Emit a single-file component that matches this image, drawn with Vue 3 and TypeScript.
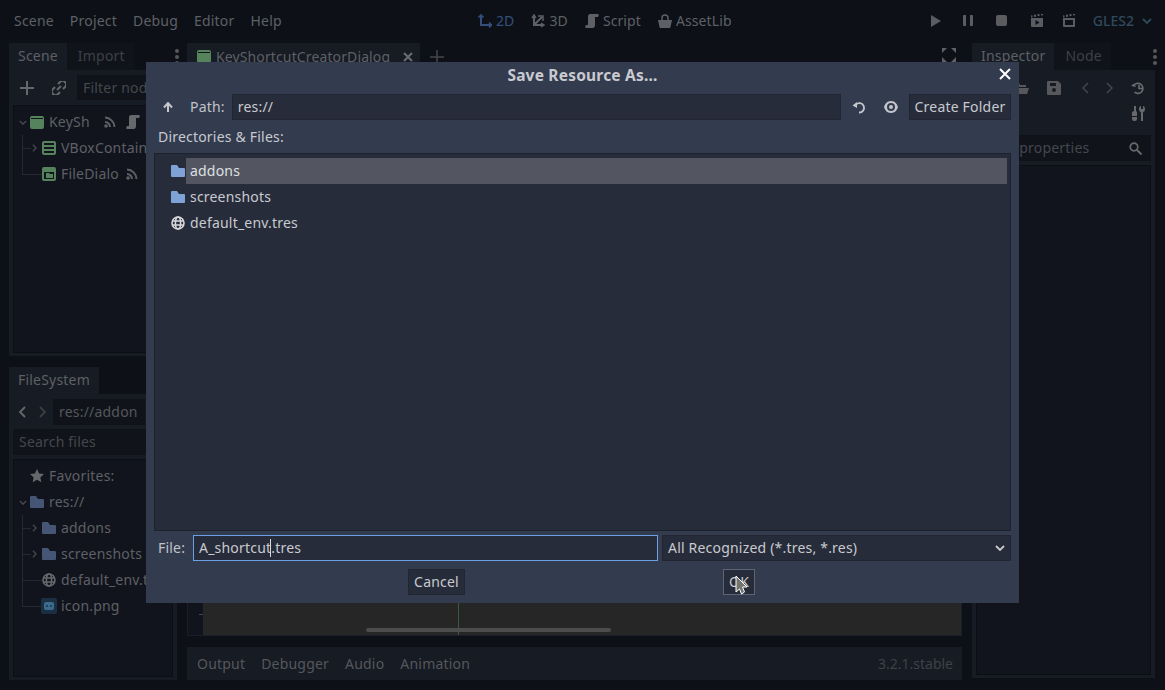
<script setup lang="ts">
const menus: string[] = ['Scene', 'Project', 'Debug', 'Editor', 'Help']
const bottomTabs: string[] = ['Output', 'Debugger', 'Audio', 'Animation']
</script>

<template>
  <div class="app">
    <svg class="defs" width="0" height="0">
      <symbol id="folder" viewBox="0 0 14 12"><path d="M0 1a1 1 0 0 1 1-1h5l2 3h5a1 1 0 0 1 1 1v7a1 1 0 0 1-1 1H1a1 1 0 0 1-1-1z" fill="currentColor" /></symbol>
      <symbol id="globe" viewBox="0 0 14 14"><g fill="none" stroke="currentColor" stroke-width="1.600"><circle cx="7" cy="7" r="6" /><ellipse cx="7" cy="7" rx="2.600" ry="6" /><path d="M1 5h12M1 9h12" /></g></symbol>
      <symbol id="rss" viewBox="0 0 12 12"><g fill="none" stroke="currentColor" stroke-width="2"><path d="M1 1.500c5 0 9.500 4.500 9.500 9.500" /><path d="M1 6c2.800 0 5 2.200 5 5" /></g><circle cx="2" cy="10" r="1.800" fill="currentColor" /></symbol>
      <symbol id="scroll" viewBox="0 0 14 14"><path d="M5 0h8c1 0 1 2 0 3h-3v8c0 2-1 3-2 3H1c-1 0-1-2 0-3h2V2c0-1 1-2 2-2z" fill="currentColor" /></symbol>
      <symbol id="chevdown" viewBox="0 0 10 6"><path d="M1 1l4 4 4-4" fill="none" stroke="currentColor" stroke-width="1.800" /></symbol>
      <symbol id="chevright" viewBox="0 0 6 10"><path d="M1 1l4 4-4 4" fill="none" stroke="currentColor" stroke-width="1.800" /></symbol>
      <symbol id="clap" viewBox="0 0 14 13"><path d="M1 4h12v8a1 1 0 0 1-1 1H2a1 1 0 0 1-1-1z" fill="currentColor" /><path d="M1 2.500l1.500-.3M4 1.900l2-.4M7.500 1.200l2-.4M11 .6l2-.4" stroke="currentColor" stroke-width="2" /><path d="M5.500 6v5l4-2.500z" fill="#0e1118" /></symbol>
      <symbol id="clap2" viewBox="0 0 14 13"><path d="M1 4h12v8a1 1 0 0 1-1 1H2a1 1 0 0 1-1-1z" fill="currentColor" /><path d="M1 2.500l1.500-.3M4 1.900l2-.4M7.500 1.200l2-.4M11 .6l2-.4" stroke="currentColor" stroke-width="2" /><rect x="3" y="6" width="8" height="5" fill="#0e1118" /></symbol>
    </svg>

    <header class="topbar">
      <nav class="menus">
        <span v-for="m in menus" :key="m">{{ m }}</span>
      </nav>
      <div class="modes">
        <span class="mode active">
          <svg width="14" height="14" viewBox="0 0 14 14"><path d="M3 1v10h11" fill="none" stroke="currentColor" stroke-width="2" /><path d="M0.500 3.500L3 1l2.500 2.500M11 8.500l2.500 2.500-2.500 2.500" fill="none" stroke="currentColor" stroke-width="1.600" /></svg>2D
        </span>
        <span class="mode">
          <svg width="14" height="14" viewBox="0 0 14 14"><path d="M3 2v9h9M3 11l8-8" fill="none" stroke="currentColor" stroke-width="2" /><path d="M1 4l2-3 2 3M10 9l3 2-3 2M7 2h5v5" fill="none" stroke="currentColor" stroke-width="1.500" /></svg>3D
        </span>
        <span class="mode">
          <svg width="14" height="14"><use href="#scroll" /></svg>Script
        </span>
        <span class="mode">
          <svg width="14" height="14" viewBox="0 0 14 14"><path d="M0 6h14l-1.500 7a1 1 0 0 1-1 1h-9a1 1 0 0 1-1-1z" fill="currentColor" /><path d="M4 6V4a3 3 0 0 1 6 0v2" fill="none" stroke="currentColor" stroke-width="1.500" /></svg>AssetLib
        </span>
      </div>
      <div class="runbar">
        <svg class="r-play" width="10" height="12" viewBox="0 0 10 12"><path d="M0 0l10 6-10 6z" fill="currentColor" /></svg>
        <svg class="r-pause" width="10" height="11" viewBox="0 0 10 11"><path d="M0 1a1 1 0 0 1 1-1h2v11H1a1 1 0 0 1-1-1zM7 0h2a1 1 0 0 1 1 1v9a1 1 0 0 1-1 1H7z" fill="currentColor" /></svg>
        <svg class="r-stop" width="11" height="11" viewBox="0 0 11 11"><rect width="11" height="11" rx="2" fill="currentColor" /></svg>
        <svg class="r-m1" width="14" height="13"><use href="#clap" /></svg>
        <svg class="r-m2" width="14" height="13"><use href="#clap2" /></svg>
        <span class="gles">GLES2</span>
        <svg class="gles-chev" width="10" height="6"><use href="#chevdown" /></svg>
      </div>
    </header>

    <main class="workspace">
      <aside class="leftcol">
        <section class="dock scene-dock">
          <div class="tabs">
            <span class="tab on">Scene</span>
            <span class="tab">Import</span>
            <span class="dots"><i /><i /><i /></span>
          </div>
          <div class="dockbody">
            <div class="toolrow">
              <svg class="tool-plus" width="14" height="14" viewBox="0 0 14 14"><path d="M7 0v14M0 7h14" stroke="currentColor" stroke-width="2" /></svg>
              <svg class="tool-link" width="14" height="14" viewBox="0 0 14 14"><g fill="none" stroke="currentColor" stroke-width="2"><path d="M6 3l2-2a3 3 0 0 1 5 5l-2 2" /><path d="M8 11l-2 2a3 3 0 0 1-5-5l2-2" /><path d="M5 9l4-4" /></g></svg>
              <span class="field filter">Filter nodes</span>
            </div>
            <div class="treebox scene-tree">
              <div class="row"><svg class="chev" width="8" height="5"><use href="#chevdown" /></svg><span class="node-ic"><b /></span><span>KeySh</span>
                <svg class="rss1" width="12" height="12"><use href="#rss" /></svg>
                <svg class="scr1" width="14" height="14"><use href="#scroll" /></svg>
              </div>
              <div class="row in1 first"><svg class="chevr" width="5" height="8"><use href="#chevright" /></svg>
                <svg class="green" width="14" height="14" viewBox="0 0 14 14"><path fill-rule="evenodd" d="M2 0h10a2 2 0 0 1 2 2v10a2 2 0 0 1-2 2H2a2 2 0 0 1-2-2V2a2 2 0 0 1 2-2zm0 2v2h10V2zm0 4v2h10V6zm0 4v2h10v-2z" fill="currentColor" /></svg>
                <span>VBoxContain</span>
              </div>
              <div class="row in1 noarrow last">
                <svg class="green" width="14" height="14" viewBox="0 0 14 14"><path fill-rule="evenodd" d="M2 0h10a2 2 0 0 1 2 2v10a2 2 0 0 1-2 2H2a2 2 0 0 1-2-2V2a2 2 0 0 1 2-2zM2 5v7h10V5zm2 1h3l1 1h3v4H4z" fill="currentColor" /></svg>
                <span>FileDialo</span>
                <svg class="rss2" width="12" height="12"><use href="#rss" /></svg>
              </div>
            </div>
          </div>
        </section>

        <section class="dock fs-dock">
          <div class="tabs">
            <span class="tab on">FileSystem</span>
          </div>
          <div class="dockbody">
            <div class="navrow">
              <svg class="nav-l" width="7" height="12" viewBox="0 0 7 12"><path d="M6 1L1 6l5 5" fill="none" stroke="currentColor" stroke-width="1.800" /></svg>
              <svg class="nav-r" width="7" height="12" viewBox="0 0 7 12"><path d="M1 1l5 5-5 5" fill="none" stroke="currentColor" stroke-width="1.800" /></svg>
              <span class="field pathf">res://addon</span>
            </div>
            <div class="field searchf">Search files</div>
            <div class="treebox fs-tree">
              <div class="row fav"><svg class="star" width="14" height="14" viewBox="0 0 14 14"><path d="M7 0l2.100 4.600 4.900.5-3.700 3.300 1.100 4.900L7 10.800l-4.400 2.500 1.100-4.900L0 5.100l4.900-.5z" fill="currentColor" /></svg><span>Favorites:</span></div>
              <div class="row"><svg class="chev" width="8" height="5"><use href="#chevdown" /></svg><svg class="fsfolder" width="14" height="12"><use href="#folder" /></svg><span>res://</span></div>
              <div class="row in1 first"><svg class="chevr" width="5" height="8"><use href="#chevright" /></svg><svg class="fsfolder" width="14" height="12"><use href="#folder" /></svg><span>addons</span></div>
              <div class="row in1"><svg class="chevr" width="5" height="8"><use href="#chevright" /></svg><svg class="fsfolder" width="14" height="12"><use href="#folder" /></svg><span>screenshots</span></div>
              <div class="row in1 noarrow"><svg class="fsglobe" width="14" height="14"><use href="#globe" /></svg><span>default_env.tres</span></div>
              <div class="row in1 noarrow last"><svg class="pngicon" width="16" height="16" viewBox="0 0 16 16"><rect width="16" height="16" rx="2" fill="#1b2f42" /><rect x="3" y="4" width="10" height="8" rx="2" fill="#3c6b8f" /><circle cx="6" cy="8" r="1" fill="#1b2f42" /><circle cx="10" cy="8" r="1" fill="#1b2f42" /></svg><span>icon.png</span></div>
            </div>
          </div>
        </section>
      </aside>

      <section class="center">
        <div class="tabs center-tabs">
          <span class="tab on doc">
            <span class="node-ic small"><b /></span>KeyShortcutCreatorDialog
            <svg class="doc-x" width="10" height="10" viewBox="0 0 10 10"><path d="M1 1l8 8M9 1L1 9" stroke="currentColor" stroke-width="2" /></svg>
          </span>
          <svg class="doc-plus" width="14" height="14" viewBox="0 0 14 14"><path d="M7 0v14M0 7h14" stroke="currentColor" stroke-width="1.500" /></svg>
          <svg class="fullscr" width="14" height="14" viewBox="0 0 14 14"><path d="M0 0h5L0 5zM14 0v5L9 0zM0 14V9l5 5zM14 14H9l5-5z" fill="currentColor" /></svg>
        </div>
        <div class="viewport">
          <div class="ruler"><i /></div>
          <div class="canvas">
            <i class="yaxis" />
            <i class="hscroll" />
          </div>
        </div>
        <div class="bottombar">
          <span v-for="t in bottomTabs" :key="t">{{ t }}</span>
          <span class="version">3.2.1.stable</span>
        </div>
      </section>

      <aside class="rightcol">
        <div class="tabs">
          <span class="tab on">Inspector</span>
          <span class="tab">Node</span>
          <span class="dots"><i /><i /><i /></span>
        </div>
        <div class="dockbody inspector">
          <div class="insp-tools">
            <svg width="15" height="12" viewBox="0 0 15 12"><path d="M1 1h4l1 2h6v2H3L1 11zM3 6h12l-2 6H1z" fill="currentColor" /></svg>
            <svg width="14" height="14" viewBox="0 0 14 14"><path fill-rule="evenodd" d="M1 0h10l3 3v10a1 1 0 0 1-1 1H1a1 1 0 0 1-1-1V1a1 1 0 0 1 1-1zm2 2v3h6V2zm4 5a2 2 0 1 0 0 4 2 2 0 0 0 0-4z" fill="currentColor" /></svg>
            <svg class="in-l" width="7" height="12" viewBox="0 0 7 12"><path d="M6 1L1 6l5 5" fill="none" stroke="currentColor" stroke-width="1.500" /></svg>
            <svg class="in-r" width="7" height="12" viewBox="0 0 7 12"><path d="M1 1l5 5-5 5" fill="none" stroke="currentColor" stroke-width="1.500" /></svg>
            <svg class="in-hist" width="14" height="14" viewBox="0 0 14 14"><g fill="none" stroke="currentColor" stroke-width="1.600"><path d="M2.500 5a5 5 0 1 1 1 6" /><path d="M8 4v3.500h3" /></g><path d="M0 5l3-2.500L5 6z" fill="currentColor" /></svg>
          </div>
          <div class="insp-tool2">
            <svg width="13" height="15" viewBox="0 0 13 15"><path d="M2 0h2v5l1 1v4H0V6l2-1zM0 11h5v2a2 2 0 0 1-2 2H2a2 2 0 0 1-2-2zM9 0v3h2V0c1 0 2 1 2 3s-1 3-2 3v9H9V6C8 6 7 5 7 3s1-3 2-3z" fill="currentColor" /></svg>
          </div>
          <div class="field insp-filter">
            <span>Filter properties</span>
            <svg width="13" height="13" viewBox="0 0 13 13"><circle cx="5" cy="5" r="3.800" fill="none" stroke="currentColor" stroke-width="1.700" /><path d="M8 8l4.500 4.500" stroke="currentColor" stroke-width="2" /></svg>
          </div>
          <div class="treebox insp-box" />
        </div>
      </aside>
    </main>

    <div class="dialog">
      <div class="dlg-title">Save Resource As...
        <svg class="dlg-x" width="12" height="12" viewBox="0 0 12 12"><path d="M1 1l10 10M11 1L1 11" stroke="#ffffff" stroke-width="2" /></svg>
      </div>
      <div class="dlg-path">
        <svg class="up" width="10" height="10" viewBox="0 0 10 10"><path d="M5 10V2M1 5.500L5 1l4 4.500" fill="none" stroke="#c4c6cc" stroke-width="2" /></svg>
        <span class="lbl">Path:</span>
        <span class="input path-in">res://</span>
        <svg class="refresh" width="14" height="14" viewBox="0 0 14 14"><path d="M4 4.500a4.700 4.700 0 1 1 3 8" fill="none" stroke="#c4c6cc" stroke-width="1.800" /><path d="M0.500 5.500L5 2v6z" fill="#c4c6cc" /></svg>
        <svg class="eye" width="14" height="12" viewBox="0 0 14 12"><path fill-rule="evenodd" d="M7 0c4 0 6 3 7 6-1 3-3 6-7 6s-6-3-7-6c1-3 3-6 7-6zm0 2a4 4 0 1 0 0 8 4 4 0 0 0 0-8zm0 2a2 2 0 1 1 0 4 2 2 0 0 1 0-4z" fill="#c4c6cc" /></svg>
        <span class="btn create">Create Folder</span>
      </div>
      <div class="dlg-label">Directories &amp; Files:</div>
      <div class="dlg-list">
        <div class="item">
          <svg class="blue" width="14" height="12"><use href="#folder" /></svg>
          <span class="sel">addons</span>
        </div>
        <div class="item">
          <svg class="blue" width="14" height="12"><use href="#folder" /></svg>
          <span class="nm">screenshots</span>
        </div>
        <div class="item">
          <svg class="white" width="14" height="14"><use href="#globe" /></svg>
          <span class="nm">default_env.tres</span>
        </div>
      </div>
      <div class="dlg-file">
        <span class="lbl">File:</span>
        <span class="input file-in">A_shortcut.tres<i class="caret" /></span>
        <span class="input type-in">All Recognized (*.tres, *.res)
          <svg width="10" height="6"><use href="#chevdown" /></svg>
        </span>
      </div>
      <div class="dlg-btns">
        <span class="btn cancel">Cancel</span>
        <span class="btn ok">OK</span>
      </div>
      <svg class="pointer" width="13" height="22" viewBox="0 0 13 22"><path d="M1 1l11 11H7.500l2 5-3 2-2-5L1 17z" fill="#74746e" stroke="#ffffff" stroke-width="1" /></svg>
    </div>
  </div>
</template>

<style>
html, body { margin: 0; background: #0d1017; }
</style>

<style scoped>
.app {
  position: relative;
  width: 1165px;
  height: 690px;
  overflow: hidden;
  background: #0d1017;
  color: #5e6066;
  font: 14px/20px "Noto Sans", sans-serif;
  letter-spacing: 0.2px;
}
.defs { position: absolute; }
svg { flex: none; display: block; }

.topbar { height: 43px; display: flex; align-items: center; padding: 0 0 2px 14px; box-sizing: border-box; }
.menus { display: flex; gap: 16px; }
.modes { display: flex; gap: 17px; position: absolute; left: 478px; letter-spacing: 0.1px; }
.mode { display: flex; align-items: center; gap: 4px; }
.mode.active { color: #34507a; }
.runbar { display: flex; align-items: center; margin-left: auto; padding-right: 13px; color: #5a5c60; }
.r-pause { margin-left: 22px; }
.r-stop { margin-left: 23px; }
.r-m1 { margin-left: 23px; }
.r-m2 { margin-left: 18px; }
.gles { margin-left: 17px; color: #30495c; font-weight: 500; letter-spacing: 0; }
.gles-chev { margin-left: 8px; color: #30495c; }

.workspace { display: grid; grid-template-columns: 168px 775px 183px; column-gap: 10px; padding-left: 9px; height: 637px; }
.leftcol { display: flex; flex-direction: column; height: 637px; }
.dock { display: flex; flex-direction: column; }
.scene-dock { height: 313px; }
.fs-dock { height: 313px; margin-top: 11px; }
.tabs { display: flex; height: 27px; flex: none; position: relative; }
.tab { padding: 3px 9px 0; box-sizing: border-box; height: 27px; background: #10131a; color: #3e4147; }
.tab.on { background: #171b24; color: #5e6066; }
.tab + .tab { padding-left: 11px; }
.dots { position: absolute; right: -2px; top: 6px; display: flex; flex-direction: column; gap: 2px; }
.dots i { width: 4px; height: 4px; border-radius: 50%; background: #56585c; }
.dockbody { flex: 1; background: #171b24; padding: 5px 4px 3px; display: flex; flex-direction: column; min-height: 0; }
.field { background: #10131a; border: 1px solid #0f1219; box-sizing: border-box; height: 26px; line-height: 24px; padding-left: 5px; color: #45474d; overflow: hidden; white-space: nowrap; }
.treebox { background: #11141c; border: 1px solid #0b0e14; box-sizing: border-box; flex: 1; min-height: 0; color: #5e6066; overflow: hidden; }
.toolrow { display: flex; align-items: center; height: 25px; color: #66686c; }
.tool-plus { margin-left: 7px; }
.tool-link { margin-left: 18px; }
.filter { margin-left: 11px; flex: 1; height: 25px; }
.scene-tree { margin-top: 5px; padding-top: 3px; }
.row { display: flex; align-items: center; height: 26px; padding-left: 3px; white-space: nowrap; position: relative; }
.row > span:last-of-type { margin-left: 5px; }
.chev { color: #44464b; margin-right: 3px; margin-left: 2px; }
.chevr { color: #44464b; margin-right: 5px; margin-left: 15px; }
.in1::after { content: ""; position: absolute; left: 8px; top: 0; bottom: 0; width: 1px; background: #25282f; }
.in1.last::after { bottom: 13px; }
.in1::before { content: ""; position: absolute; left: 8px; top: 13px; width: 9px; height: 1px; background: #25282f; }
.in1.noarrow { padding-left: 28px; }
.in1.noarrow::before { width: 20px; }
.node-ic { width: 14px; height: 13px; background: #55835b; border-radius: 2px; position: relative; display: block; flex: none; }
.node-ic b { position: absolute; left: 1px; right: 1px; top: 2px; height: 1px; background: #11141c; }
.row > .node-ic + span { margin-left: 5px; }
.green { color: #55835b; }
.rss1 { position: absolute; left: 90px; top: 7px; color: #5e6066; }
.scr1 { position: absolute; left: 112px; top: 6px; color: #66686c; }
.rss2 { position: absolute; left: 112px; top: 7px; color: #5e6066; }
.pngicon { margin-left: -1px; margin-right: -1px; }

.navrow { display: flex; align-items: center; height: 26px; color: #66686c; margin-top: 0; }
.nav-l { margin-left: 6px; }
.nav-r { margin-left: 13px; color: #3c3e43; }
.pathf { margin-left: 7px; width: 92px; color: #55575c; }
.searchf { margin-top: 4px; height: 26px; }
.fs-tree { margin-top: 4px; padding-top: 3px; }
.star { margin-left: 13px; color: #66686c; }
.fav > span { margin-left: 5px !important; }
.fsfolder { color: #445575; }
.fsglobe { color: #66686c; }

.center { display: flex; flex-direction: column; }
.center-tabs { align-items: flex-start; margin-left: 0; }
.doc { display: flex; align-items: center; gap: 5px; width: 233px; padding: 0 9px 0 10px; letter-spacing: 0.12px; }
.node-ic.small { background: #55835b; }
.doc-x { margin-left: auto; margin-right: -2px; color: #6a6c70; }
.doc-plus { margin: 7px 0 0 10px; color: #45474b; }
.fullscr { margin: 5px 0 0 auto; margin-right: 6px; color: #5e6066; }
.viewport { height: 566px; display: flex; border: 1px solid #1a1e28; box-sizing: border-box; background: #11141c; }
.ruler { width: 15px; position: relative; }
.ruler i { position: absolute; left: 11px; bottom: 20px; width: 4px; height: 1px; background: #44464b; }
.canvas { flex: 1; background: #262626; position: relative; }
.yaxis { position: absolute; left: 255px; top: 0; bottom: 0; width: 1px; background: #3a5a3f; }
.hscroll { position: absolute; left: 163px; bottom: 3px; width: 245px; height: 4px; border-radius: 2px; background: #4d4d4d; }
.bottombar { margin-top: 11px; height: 33px; background: #171b24; display: flex; align-items: center; gap: 16px; padding: 0 9px 0 10px; color: #55575c; }
.version { margin-left: auto; color: #3e4147; letter-spacing: 0; }

.rightcol { display: flex; flex-direction: column; height: 635px; }
.inspector { padding: 0 4px 3px; }
.insp-tools { height: 36px; display: flex; align-items: center; color: #56585c; padding-left: 38px; flex: none; }
.insp-tools svg:nth-child(2) { margin-left: 18px; }
.in-l { margin-left: 21px; color: #44464b; }
.in-r { margin-left: 17px; color: #44464b; }
.in-hist { margin-left: 18px; color: #6a6c70; }
.insp-tool2 { height: 24px; flex: none; display: flex; justify-content: flex-end; padding-right: 6px; align-items: flex-start; color: #66686c; }
.insp-filter { display: flex; align-items: center; justify-content: space-between; flex: none; padding: 0 8px 0 0; margin-top: 5px; height: 26px; }
.insp-filter svg { color: #66686c; }
.insp-filter span { margin-left: 4px; }
.insp-box { margin-top: 4px; }

.dialog {
  position: absolute; left: 146px; top: 62px; width: 873px; height: 541px;
  background: #333b4f; box-sizing: border-box; padding: 0 8px;
  color: #c8cad0; display: flex; flex-direction: column;
}
.dlg-title { height: 32px; line-height: 26px; text-align: center; font-weight: 700; font-size: 15.500px; color: #c8cad0; position: relative; flex: none; }
.dlg-x { position: absolute; right: 0; top: 6px; }
.dlg-path { height: 26px; display: flex; align-items: center; flex: none; }
.up { margin-left: 9px; }
.lbl { color: #c0c3ca; }
.dlg-path .lbl { margin-left: 17px; }
.input { background: #272c3a; border: 1px solid #222632; box-sizing: border-box; height: 26px; line-height: 24px; padding-left: 5px; display: block; white-space: nowrap; flex: none; }
.path-in { margin-left: 7px; width: 609px; }
.refresh { margin-left: 11px; }
.eye { margin-left: 18px; }
.btn { background: #272c3a; border: 1px solid #222632; box-sizing: border-box; height: 26px; line-height: 24px; text-align: center; flex: none; display: block; }
.create { margin-left: auto; width: 102px; }
.dlg-label { height: 33px; line-height: 33px; padding-left: 4px; flex: none; }
.dlg-list { height: 378px; flex: none; background: #272c3a; border: 1px solid #1e222d; box-sizing: border-box; padding: 4px 3px 0 16px; }
.item { display: flex; align-items: center; height: 26px; }
.blue { color: #7fa3d6; }
.white { color: #d6d8dc; }
.sel { flex: 1; height: 26px; line-height: 26px; margin-left: 1px; padding-left: 4px; background: #535661; color: #dfe0e4; }
.nm { margin-left: 5px; }
.dlg-file { margin-top: 4px; height: 26px; display: flex; align-items: center; flex: none; }
.dlg-file .lbl { margin-left: 4px; width: 27px; }
.file-in { margin-left: 8px; width: 465px; border-color: #6b9fe6; position: relative; }
.caret { position: absolute; left: 76px; top: 3px; width: 1px; height: 18px; background: #d8d9dd; }
.type-in { margin-left: 4px; width: 349px; display: flex; align-items: center; justify-content: space-between; padding-right: 5px; }
.dlg-btns { margin-top: 8px; height: 26px; display: flex; flex: none; }
.cancel { margin-left: 254px; width: 57px; }
.ok { margin-left: 258px; width: 32px; border-color: #5d6473; }
.pointer { position: absolute; left: 589px; top: 513px; }
</style>
